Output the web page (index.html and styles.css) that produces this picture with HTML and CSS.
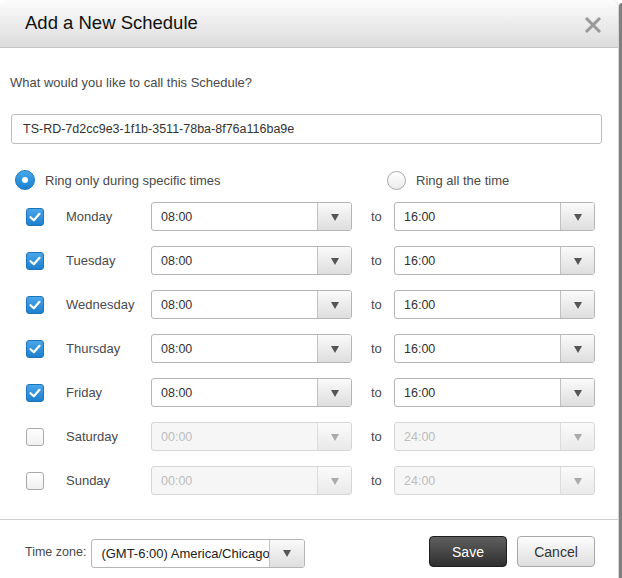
FILE: index.html
```html
<!DOCTYPE html>
<html>
<head>
<meta charset="utf-8">
<title>Add a New Schedule</title>
<link rel="stylesheet" href="styles.css">
</head>
<body>
<div class="page">
  <div class="dialog">
    <div class="header">
      <h1 class="title">Add a New Schedule</h1>
      <span class="close">
        <svg width="18" height="16" viewBox="0 0 18 16"><path d="M2 1 L16 15 M16 1 L2 15" stroke="#9a9a9a" stroke-width="3" fill="none"/></svg>
      </span>
    </div>
    <div class="content">
      <p class="prompt">What would you like to call this Schedule?</p>
      <div class="textbox">TS-RD-7d2cc9e3-1f1b-3511-78ba-8f76a116ba9e</div>
      <div class="modes">
        <div class="mode mode-specific"><span class="radio checked"></span><span class="mode-label">Ring only during specific times</span></div>
        <div class="mode mode-all"><span class="radio"></span><span class="mode-label">Ring all the time</span></div>
      </div>
      <div class="days">
        <div class="day">
          <span class="check checked"><svg width="18" height="18" viewBox="0 0 18 18"><path d="M4.5 9.2 L7.8 12.2 L13.5 5.8" stroke="#fff" stroke-width="2.2" fill="none" stroke-linecap="round" stroke-linejoin="round"/></svg></span>
          <span class="day-name">Monday</span>
          <div class="select"><span class="value">08:00</span><span class="arrow"><i></i></span></div>
          <span class="to">to</span>
          <div class="select"><span class="value">16:00</span><span class="arrow"><i></i></span></div>
        </div>
        <div class="day">
          <span class="check checked"><svg width="18" height="18" viewBox="0 0 18 18"><path d="M4.5 9.2 L7.8 12.2 L13.5 5.8" stroke="#fff" stroke-width="2.2" fill="none" stroke-linecap="round" stroke-linejoin="round"/></svg></span>
          <span class="day-name">Tuesday</span>
          <div class="select"><span class="value">08:00</span><span class="arrow"><i></i></span></div>
          <span class="to">to</span>
          <div class="select"><span class="value">16:00</span><span class="arrow"><i></i></span></div>
        </div>
        <div class="day">
          <span class="check checked"><svg width="18" height="18" viewBox="0 0 18 18"><path d="M4.5 9.2 L7.8 12.2 L13.5 5.8" stroke="#fff" stroke-width="2.2" fill="none" stroke-linecap="round" stroke-linejoin="round"/></svg></span>
          <span class="day-name">Wednesday</span>
          <div class="select"><span class="value">08:00</span><span class="arrow"><i></i></span></div>
          <span class="to">to</span>
          <div class="select"><span class="value">16:00</span><span class="arrow"><i></i></span></div>
        </div>
        <div class="day">
          <span class="check checked"><svg width="18" height="18" viewBox="0 0 18 18"><path d="M4.5 9.2 L7.8 12.2 L13.5 5.8" stroke="#fff" stroke-width="2.2" fill="none" stroke-linecap="round" stroke-linejoin="round"/></svg></span>
          <span class="day-name">Thursday</span>
          <div class="select"><span class="value">08:00</span><span class="arrow"><i></i></span></div>
          <span class="to">to</span>
          <div class="select"><span class="value">16:00</span><span class="arrow"><i></i></span></div>
        </div>
        <div class="day">
          <span class="check checked"><svg width="18" height="18" viewBox="0 0 18 18"><path d="M4.5 9.2 L7.8 12.2 L13.5 5.8" stroke="#fff" stroke-width="2.2" fill="none" stroke-linecap="round" stroke-linejoin="round"/></svg></span>
          <span class="day-name">Friday</span>
          <div class="select"><span class="value">08:00</span><span class="arrow"><i></i></span></div>
          <span class="to">to</span>
          <div class="select"><span class="value">16:00</span><span class="arrow"><i></i></span></div>
        </div>
        <div class="day">
          <span class="check"></span>
          <span class="day-name">Saturday</span>
          <div class="select disabled"><span class="value">00:00</span><span class="arrow"><i></i></span></div>
          <span class="to">to</span>
          <div class="select disabled"><span class="value">24:00</span><span class="arrow"><i></i></span></div>
        </div>
        <div class="day">
          <span class="check"></span>
          <span class="day-name">Sunday</span>
          <div class="select disabled"><span class="value">00:00</span><span class="arrow"><i></i></span></div>
          <span class="to">to</span>
          <div class="select disabled"><span class="value">24:00</span><span class="arrow"><i></i></span></div>
        </div>
      </div>
    </div>
    <div class="footer">
      <div class="tz">
        <span class="tz-label">Time zone:</span>
        <div class="select tz-select"><span class="value">(GMT-6:00) America/Chicago</span><span class="arrow"><i></i></span></div>
      </div>
      <div class="buttons">
        <span class="btn btn-save">Save</span>
        <span class="btn btn-cancel">Cancel</span>
      </div>
    </div>
  </div>
  <div class="edge"></div>
</div>
</body>
</html>
```
FILE: styles.css
```css
html, body {
  margin: 0;
  padding: 0;
  background: #fff;
}
body {
  font-family: "Liberation Sans", Arial, sans-serif;
  color: #555;
}
.page {
  display: flex;
  height: 578px;
  overflow: hidden;
}
.dialog {
  width: 618px;
  border-right: 1px solid #d4d4d4;
  background: #fff;
  border-radius: 7px 7px 0 0;
  display: flex;
  flex-direction: column;
}
.edge {
  flex: 1;
  background: #808080;
  margin-top: 3px;
  border-top-left-radius: 3px;
}
.header {
  height: 47px;
  border-bottom: 1px solid #c4c4c4;
  border-radius: 7px 7px 0 0;
  background: linear-gradient(#fcfcfc, #e9e9e9 60%, #dcdcdc);
  display: flex;
  align-items: center;
  justify-content: space-between;
  padding: 0 16px 0 25px;
}
.title {
  margin: 0;
  font-size: 18.5px;
  font-weight: normal;
  color: #111;
  line-height: 22px;
  padding-bottom: 1px;
}
.close {
  display: flex;
  width: 18px;
  height: 16px;
  margin-top: 2px;
}
.content {
  padding: 27px 16px 0 10px;
}
.prompt {
  margin: 0;
  font-size: 13px;
  line-height: 16px;
  color: #4a4a4a;
}
.textbox {
  margin-top: 23px;
  height: 28px;
  border: 1px solid #bdbdbd;
  border-radius: 3px;
  box-sizing: content-box;
  padding: 0 11px;
  font-size: 12.5px;
  line-height: 28px;
  color: #333;
  margin-left: 1px;
}
.modes {
  display: flex;
  margin-top: 26px;
  height: 20px;
  align-items: center;
}
.mode {
  display: flex;
  align-items: center;
}
.mode-specific {
  margin-left: 5px;
  width: 372px;
}
.mode-label {
  font-size: 13px;
  color: #4a4a4a;
  margin-left: 10px;
}
.radio {
  width: 20px;
  height: 20px;
  border-radius: 50%;
  box-sizing: border-box;
  border: 1px solid #a9a9a9;
  background: linear-gradient(#fff, #ececec);
  display: flex;
  align-items: center;
  justify-content: center;
}
.mode-all .radio {
  width: 19px;
  height: 19px;
}
.radio.checked {
  border: 1px solid #1a78c2;
  background: linear-gradient(#45a6ea, #1c80cf);
}
.radio.checked::after {
  content: "";
  width: 6px;
  height: 6px;
  border-radius: 50%;
  background: #fff;
}
.days {
  margin-top: 12px;
  padding-left: 16px;
  display: flex;
  flex-direction: column;
  gap: 15px;
}
.day {
  display: flex;
  align-items: center;
  height: 29px;
}
.check {
  width: 18px;
  height: 18px;
  box-sizing: border-box;
  border: 1px solid #a9a9a9;
  border-radius: 3px;
  background: linear-gradient(#fff, #f0f0f0);
  margin-right: 22px;
  display: flex;
  position: relative;
}
.check.checked {
  border-color: #1b74bd;
  background: linear-gradient(#4aa6ea, #1e7fcd);
}
.check svg {
  position: absolute;
  left: -1px;
  top: -1px;
}
.day-name {
  width: 85px;
  font-size: 13px;
  color: #4a4a4a;
}
.select {
  width: 201px;
  height: 29px;
  box-sizing: border-box;
  border: 1px solid #b5b5b5;
  border-radius: 3px;
  display: flex;
  background: #fff;
  overflow: hidden;
}
.select .value {
  flex: 1;
  padding-left: 9px;
  font-size: 12.5px;
  line-height: 28px;
  color: #333;
  white-space: nowrap;
  overflow: hidden;
}
.select .arrow {
  width: 33px;
  border-left: 1px solid #c2c2c2;
  background: linear-gradient(#fafafa, #dedede);
  display: flex;
  align-items: center;
  justify-content: center;
}
.select .arrow i {
  width: 0;
  height: 0;
  border-left: 4.5px solid transparent;
  border-right: 4.5px solid transparent;
  border-top: 7px solid #555;
  margin-top: 1px;
}
.select.disabled {
  border-color: #d6d6d6;
  background: #f6f6f6;
}
.select.disabled .value {
  color: #bdbdbd;
}
.select.disabled .arrow {
  border-left-color: #dcdcdc;
  background: linear-gradient(#fbfbfb, #e9e9e9);
}
.select.disabled .arrow i {
  border-top-color: #aaa;
}
.to {
  width: 42px;
  box-sizing: border-box;
  padding-left: 19px;
  font-size: 13px;
  color: #4a4a4a;
}
.footer {
  margin-top: 24px;
  border-top: 1px solid #cfcfcf;
  padding: 16px 23px 10px 25px;
  display: flex;
  justify-content: space-between;
  align-items: flex-end;
}
.tz {
  display: flex;
  align-items: center;
  height: 31px;
}
.tz-label {
  font-size: 12.5px;
  color: #4a4a4a;
  margin-right: 5px;
}
.tz-select {
  width: 214px;
  height: 29px;
  margin-top: 3px;
}
.tz-select .value {
  font-size: 13px;
  color: #222;
}
.tz-select .arrow {
  width: 34px;
}
.buttons {
  display: flex;
  gap: 10px;
}
.btn {
  width: 78px;
  height: 31px;
  box-sizing: border-box;
  border-radius: 4px;
  font-size: 14px;
  line-height: 30px;
  text-align: center;
}
.btn-save {
  background: linear-gradient(#5f5f5f, #2f2f2f);
  border: 1px solid #1e1e1e;
  color: #fff;
}
.btn-cancel {
  background: linear-gradient(#fdfdfd, #dedede);
  border: 1px solid #a8a8a8;
  color: #333;
}
```
